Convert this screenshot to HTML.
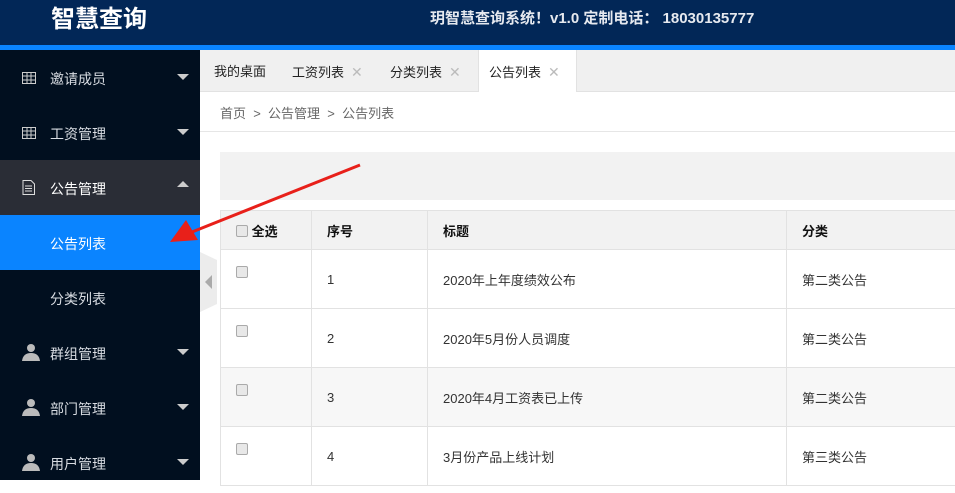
<!DOCTYPE html>
<html><head><meta charset="utf-8"><style>
*{margin:0;padding:0;box-sizing:border-box}
body{width:955px;height:480px;overflow:hidden;font-family:"Liberation Sans","Noto Sans CJK SC",sans-serif;position:relative;background:#fff}
.hd{position:absolute;left:0;top:0;width:955px;height:45px;background:#022757}
.bl{position:absolute;left:0;top:45px;width:955px;height:5px;background:#0a84ff}
.logo{position:absolute;left:51px;top:3px;color:#fff;font-size:24px;font-weight:bold;line-height:34px}
.ht{position:absolute;left:430px;top:9px;color:#e6e9ef;font-size:15px;font-weight:bold;line-height:20px}
.sb{position:absolute;left:0;top:50px;width:200px;height:430px;background:#010f1f}
.it{position:absolute;left:0;width:200px;height:55px;color:#d8dce2;font-size:14px;line-height:58px}
.it span{position:absolute;left:50px}
.car{position:absolute;left:177px;top:24px;width:0;height:0;border-left:6px solid transparent;border-right:6px solid transparent;border-top:6px solid #ccc}
.up{border-top:none;border-bottom:6px solid #ccc;top:21px}
.ic{position:absolute;left:22px;top:22px}
.tabs{position:absolute;left:200px;top:50px;width:755px;height:42px;background:#f0f0f0;border-bottom:1px solid #e2e2e2}
.tab{position:absolute;top:0;height:41px;line-height:44px;font-size:13px;color:#222}
.x{color:#bbb;font-size:14px;margin-left:7px}
.bc{position:absolute;left:220px;top:103px;font-size:13px;color:#666}
.ln{position:absolute;left:200px;top:131px;width:755px;height:1px;background:#e6e6e6}
.tool{position:absolute;left:220px;top:152px;width:735px;height:48px;background:#f2f2f2}
table{position:absolute;left:220px;top:210px;border-collapse:collapse;font-size:13px;color:#333;table-layout:fixed;width:766px}
td,th{border:1px solid #e2e2e2;text-align:left;padding-left:15px;vertical-align:middle}
th{height:39px;background:#f2f2f2;color:#111;font-weight:bold}
td{height:59px}
.cb{display:inline-block;width:12px;height:12px;border:1px solid #aaa;border-radius:2px;background:#e8e8e8;vertical-align:middle;position:relative;top:-8px}
</style></head><body>
<div class="hd"></div><div class="bl"></div>
<div class="logo">智慧查询</div>
<div class="ht">玥智慧查询系统！v1.0 定制电话： 18030135777</div>
<div class="sb">
<div class="it" style="top:0"><svg class="ic" width="14" height="12"><rect x="0.5" y="0.5" width="13" height="11" fill="none" stroke="#ccc"/><path d="M0 4H14M0 8H14M5 0V12M9 0V12" stroke="#ccc"/></svg><span>邀请成员</span><i class="car"></i></div>
<div class="it" style="top:55px"><svg class="ic" width="14" height="12"><rect x="0.5" y="0.5" width="13" height="11" fill="none" stroke="#ccc"/><path d="M0 4H14M0 8H14M5 0V12M9 0V12" stroke="#ccc"/></svg><span>工资管理</span><i class="car"></i></div>
<div class="it" style="top:110px;background:#2a2d36;color:#fff"><svg class="ic" style="top:20px" width="13" height="15"><path d="M1 .5H9L12.5 4V14.5H1Z" fill="none" stroke="#ddd"/><path d="M3 6H10M3 8.5H10M3 11H10" stroke="#ddd"/></svg><span>公告管理</span><i class="car up"></i></div>
<div class="it" style="top:165px;background:#0a84ff;color:#fff"><span>公告列表</span></div>
<div class="it" style="top:220px"><span>分类列表</span></div>
<div class="it" style="top:275px"><svg class="ic" style="top:18px" width="18" height="18"><circle cx="9" cy="5" r="4" fill="#bbb"/><path d="M0 18Q1 10 9 10Q17 10 18 18Z" fill="#bbb"/></svg><span>群组管理</span><i class="car"></i></div>
<div class="it" style="top:330px"><svg class="ic" style="top:18px" width="18" height="18"><circle cx="9" cy="5" r="4" fill="#bbb"/><path d="M0 18Q1 10 9 10Q17 10 18 18Z" fill="#bbb"/></svg><span>部门管理</span><i class="car"></i></div>
<div class="it" style="top:385px"><svg class="ic" style="top:18px" width="18" height="18"><circle cx="9" cy="5" r="4" fill="#bbb"/><path d="M0 18Q1 10 9 10Q17 10 18 18Z" fill="#bbb"/></svg><span>用户管理</span><i class="car"></i></div>
</div>
<div class="tabs">
<div class="tab" style="left:14px">我的桌面</div>
<div class="tab" style="left:92px">工资列表<span class="x">✕</span></div>
<div class="tab" style="left:190px">分类列表<span class="x">✕</span></div>
<div class="tab" style="left:278px;width:99px;background:#fff;height:42px;padding-left:10px;border-left:1px solid #e2e2e2;border-right:1px solid #e2e2e2">公告列表<span class="x">✕</span></div>
</div>
<div class="bc">首页 &nbsp;&gt;&nbsp; 公告管理 &nbsp;&gt;&nbsp; 公告列表</div>
<div class="ln"></div>
<div class="tool"></div>
<svg style="position:absolute;left:200px;top:252px" width="18" height="60"><path d="M0 0L17 8V52L0 60Z" fill="#ececec"/><path d="M12 23L5 30L12 37Z" fill="#aaa"/></svg>
<table>
<colgroup><col style="width:91px"><col style="width:116px"><col style="width:359px"><col style="width:200px"></colgroup>
<tr><th><span class="cb" style="top:-1px"></span> 全选</th><th>序号</th><th>标题</th><th>分类</th></tr>
<tr><td><span class="cb"></span></td><td>1</td><td>2020年上年度绩效公布</td><td>第二类公告</td></tr>
<tr><td><span class="cb"></span></td><td>2</td><td>2020年5月份人员调度</td><td>第二类公告</td></tr>
<tr style="background:#f7f7f7"><td><span class="cb"></span></td><td>3</td><td>2020年4月工资表已上传</td><td>第二类公告</td></tr>
<tr><td><span class="cb"></span></td><td>4</td><td>3月份产品上线计划</td><td>第三类公告</td></tr>
</table>
<svg style="position:absolute;left:0;top:0" width="955" height="480"><path d="M360 165L192 232" stroke="#e8201a" stroke-width="3"/><path d="M170 242L186 220L198 240Z" fill="#e8201a"/></svg>
</body></html>
